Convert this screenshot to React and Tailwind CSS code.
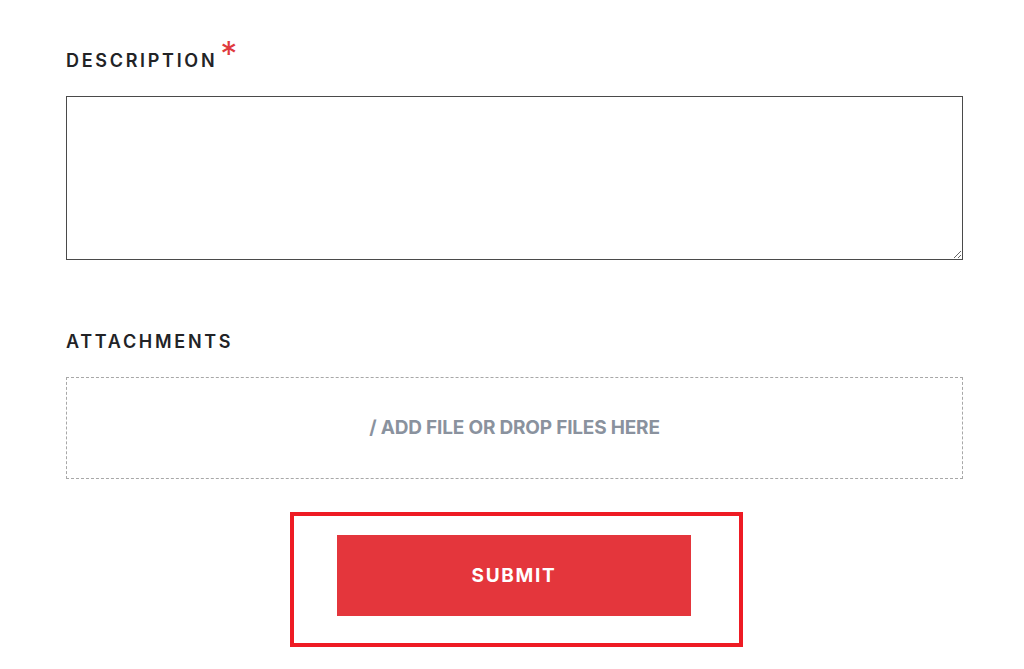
import React from 'react';

const labelCls =
  "block text-[18px] font-semibold tracking-[0.15em] uppercase text-[#222326] leading-[20px]";

export default function App() {
  return (
    <div className="min-h-[669px] bg-white font-['Inter',sans-serif]">
      <form className="w-[897px] ml-[66px] pt-[51px]" onSubmit={(e) => e.preventDefault()}>
        {/* Description */}
        <label className={labelCls}>
          Description
          <span className="relative top-[-1px] ml-[3px] text-[34px] leading-[0] font-normal text-[#e03a3e]">*</span>
        </label>
        <textarea className="mt-[25px] block w-full h-[164px] border border-[#4a4a4a] bg-white outline-none" />

        {/* Attachments */}
        <label className={`${labelCls} mt-[72px]`}>Attachments</label>
        <div className="mt-[25px] h-[102px] border border-dashed border-[#a8a8a8] flex items-center justify-center">
          <span className="text-[19px] font-bold text-[#8a929e] tracking-[-0.01em]">/ ADD FILE OR DROP FILES HERE</span>
        </div>

        {/* Submit */}
        <div className="mt-[33px] ml-[224px] w-[453px] h-[135px] border-4 border-[#ee1b24] px-[43px] pt-[19px]">
          <button
            type="submit"
            className="w-[354px] h-[81px] bg-[#e4363c] text-white text-[19px] font-bold tracking-[0.09em] pt-[2px]"
          >
            SUBMIT
          </button>
        </div>
      </form>
    </div>
  );
}
